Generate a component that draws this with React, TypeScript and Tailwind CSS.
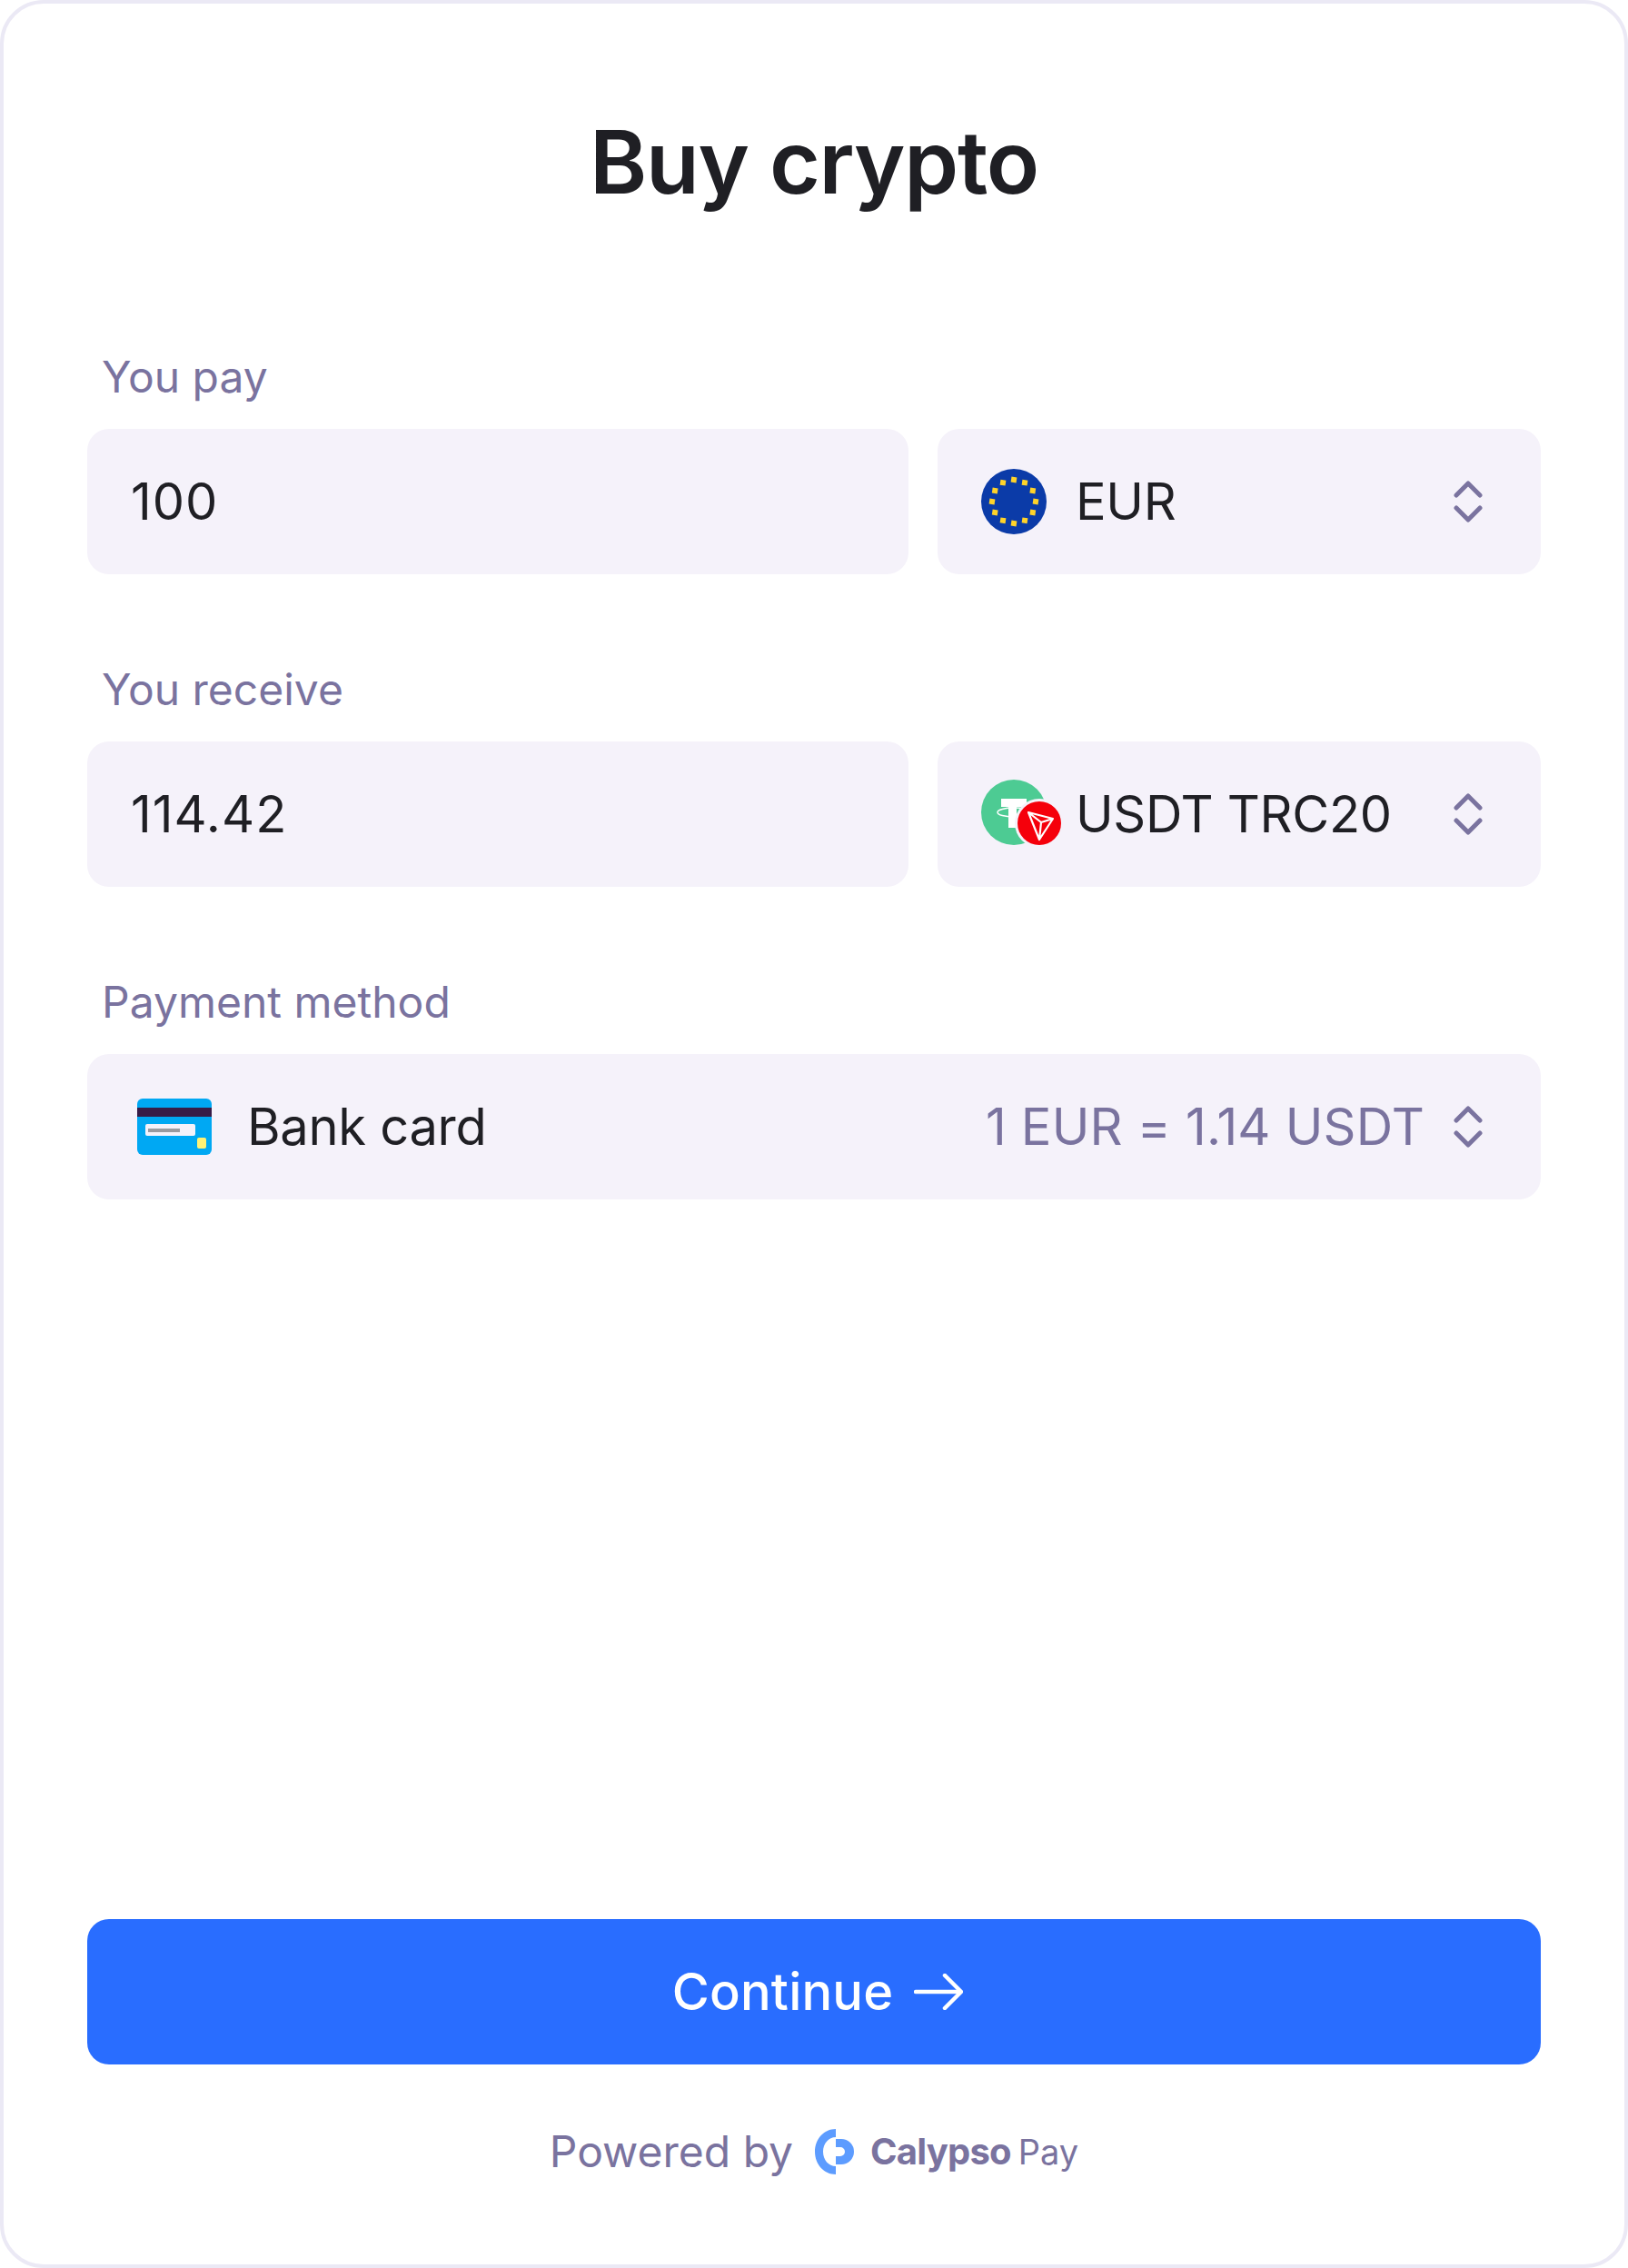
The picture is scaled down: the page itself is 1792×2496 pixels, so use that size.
import React from 'react';

const UpDown = () => (
  <svg width="32" height="48" viewBox="0 0 32 48" fill="none" stroke="#7a739f" strokeWidth="5" strokeLinecap="round" strokeLinejoin="round" className="shrink-0">
    <path d="M3 17 L16 4 L29 17" />
    <path d="M3 31 L16 44 L29 31" />
  </svg>
);

const EuroFlag = () => {
  const stars = Array.from({ length: 12 }, (_, i) => {
    const a = (i * Math.PI) / 6;
    return { x: 36 + 24 * Math.sin(a), y: 36 - 24 * Math.cos(a) };
  });
  return (
    <svg width="72" height="72" viewBox="0 0 72 72" className="shrink-0">
      <circle cx="36" cy="36" r="36" fill="#0b3ba8" />
      {stars.map((s, i) => (
        <rect key={i} x={s.x - 3} y={s.y - 3} width="6" height="6" fill="#ffd32a" transform={`rotate(8 ${s.x} ${s.y})`} />
      ))}
    </svg>
  );
};

const UsdtTron = () => (
  <svg width="96" height="76" viewBox="0 0 96 76" className="shrink-0 overflow-visible">
    <circle cx="36" cy="36" r="36" fill="#4dcb93" />
    <path d="M22 21 H50 V30 H39 V53 H30 V30 H22 Z" fill="#fff" />
    <ellipse cx="36" cy="36" rx="18" ry="5" fill="none" stroke="#fff" strokeWidth="1.5" />
    <circle cx="64" cy="48" r="27" fill="#f5f2fa" />
    <circle cx="64" cy="48" r="24" fill="#f5000b" />
    <path d="M52 36 L79 43 L64 66 Z M52 36 L66 47 L79 43 M66 47 L64 66" fill="none" stroke="#fff" strokeWidth="2.2" strokeLinejoin="round" />
  </svg>
);

const CardIcon = () => (
  <svg width="82" height="62" viewBox="0 0 82 62" className="shrink-0">
    <rect x="0" y="0" width="82" height="62" rx="6" fill="#00a8f3" />
    <rect x="0" y="10" width="82" height="10" fill="#371c47" />
    <rect x="9" y="28" width="55" height="13" rx="2" fill="#f5f2fa" />
    <rect x="12" y="33" width="35" height="4" fill="#9a9a9f" />
    <rect x="66" y="43" width="10" height="12" rx="2" fill="#fff275" />
  </svg>
);

const CalypsoLogo = () => (
  <svg width="44" height="50" viewBox="0 0 44 50" className="shrink-0">
    <path d="M23 0 C10 0 0 11 0 25 C0 39 10 50 23 50 V41 C15 41 9 34 9 25 C9 16 15 9 23 9 Z" fill="#5d9cff" />
    <path d="M23 11 H29 A14 14 0 0 1 29 39 H23 V30 H28 A5 5 0 0 0 28 20 H23 Z" fill="#5d9cff" />
  </svg>
);

const ArrowIcon = () => (
  <svg width="54" height="40" viewBox="0 0 54 40" fill="none" stroke="#fff" strokeWidth="4.5" strokeLinecap="round" strokeLinejoin="round" className="shrink-0">
    <path d="M2 20 H51" />
    <path d="M34 2 L52 20 L34 38" />
  </svg>
);

const Label = ({ children }: { children: React.ReactNode }) => (
  <div className="pl-4 mb-[28px] text-[48px] leading-[58px] text-[#7a739f]">{children}</div>
);

const Field = ({ className, children }: { className: string; children: React.ReactNode }) => (
  <div className={`h-40 rounded-3xl bg-[#f5f2fa] flex items-center text-[56px] text-[#1f1f24] ${className}`}>
    {children}
  </div>
);

const Row = ({ label, amount, icon, currency }: { label: string; amount: string; icon: React.ReactNode; currency: string }) => (
  <div>
    <Label>{label}</Label>
    <div className="flex gap-8">
      <Field className="w-[904px] pl-12 tracking-[1px]">{amount}</Field>
      <Field className="w-[664px] pl-12 pr-[64px]">
        <div className="w-[104px] shrink-0">{icon}</div>
        <span className="flex-1 tracking-[-0.3px]">{currency}</span>
        <UpDown />
      </Field>
    </div>
  </div>
);

export default function App() {
  return (
    <div className="w-[1792px] h-[2496px] bg-white font-['Inter',sans-serif]">
      <div className="h-full rounded-[48px] border-4 border-[#ebe9f5] px-[92px] flex flex-col">
        <h1 className="mt-[124px] text-center text-[96px] leading-[100px] font-semibold tracking-[-1.2px] text-[#1f1f24]">Buy crypto</h1>
        <div className="mt-[158px] flex flex-col gap-[98px]">
          <Row label="You pay" amount="100" icon={<EuroFlag />} currency="EUR" />
          <Row label="You receive" amount="114.42" icon={<UsdtTron />} currency="USDT TRC20" />
          <div>
            <Label>Payment method</Label>
            <Field className="pl-[55px] pr-[64px]">
              <div className="w-[121px] shrink-0"><CardIcon /></div>
              <span className="flex-1 tracking-[-0.3px]">Bank card</span>
              <span className="mr-8 tracking-[0.2px] text-[#7a739f]">1 EUR = 1.14 USDT</span>
              <UpDown />
            </Field>
          </div>
        </div>
        <button className="mt-auto h-40 pl-2 rounded-3xl bg-[#296dff] text-white text-[56px] tracking-[0.2px] font-medium flex items-center justify-center gap-[23px]">
          Continue
          <ArrowIcon />
        </button>
        <div className="mt-[66px] mb-[94px] h-[60px] flex items-center justify-center text-[#7a739f]">
          <span className="text-[48px] mr-6">Powered by</span>
          <CalypsoLogo />
          <span className="ml-[17px] text-[40px] font-bold tracking-[-0.8px]">Calypso</span>
          <span className="ml-2 text-[38px]">Pay</span>
        </div>
      </div>
    </div>
  );
}
